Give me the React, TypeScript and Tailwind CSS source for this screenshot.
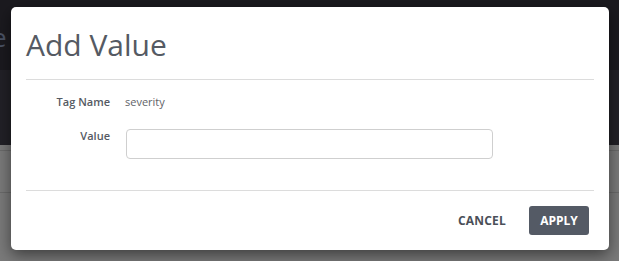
import React from "react";

export default function App() {
  return (
    <div
      className="relative w-[619px] h-[261px] overflow-hidden"
      style={{ fontFamily: '"Open Sans", sans-serif' }}
    >
      {/* background page */}
      <div className="absolute inset-0 flex flex-col">
        <div className="h-[70px] bg-[#1b1a1f] flex items-center">
          <span className="text-[26px] text-[#4b5466] -ml-[8px] mt-[4px]">e</span>
        </div>
        <div className="h-[75px] bg-[#222127]" />
        <div className="flex-1 bg-[#7a7a7a] flex flex-col">
          <div className="h-[5px]" />
          <div className="h-px bg-[#6a6a6a]" />
          <div className="h-[41px]" />
          <div className="h-px bg-[#6a6a6a]" />
        </div>
      </div>

      {/* modal */}
      <div className="absolute left-[11px] top-[7px] w-[598px] h-[243px] bg-white rounded-[5px] shadow-[0_5px_15px_rgba(0,0,0,0.5)] flex flex-col px-[15px]">
        <div className="h-[72px] flex items-start">
          <h1 className="text-[30px] leading-none text-[#555a63] mt-[23px]">Add Value</h1>
        </div>
        <div className="h-px bg-[#dcdcdc]" />
        <div className="flex flex-col pt-[15px]">
          <div className="flex items-center h-[14px]">
            <div className="w-[84px] text-right text-[11px] font-semibold text-[#555a63]">Tag Name</div>
            <div className="ml-[15px] text-[11px] text-[#5f6368]">severity</div>
          </div>
          <div className="flex items-start mt-[20px]">
            <div className="w-[84px] text-right text-[11px] font-semibold text-[#555a63] -mt-[1px]">Value</div>
            <input className="ml-[16px] w-[367px] h-[30px] border border-[#cfcfcf] rounded-[4px] outline-none" />
          </div>
        </div>
        <div className="h-px bg-[#dcdcdc] mt-[31px]" />
        <div className="flex justify-end items-center mt-[15px] mr-[5px]">
          <button className="text-[12px] font-bold text-[#4a4f58] mr-[23px] tracking-[0.2px]">CANCEL</button>
          <button className="w-[60px] h-[29px] bg-[#545a65] rounded-[3px] text-white text-[12px] font-bold">APPLY</button>
        </div>
      </div>
    </div>
  );
}
